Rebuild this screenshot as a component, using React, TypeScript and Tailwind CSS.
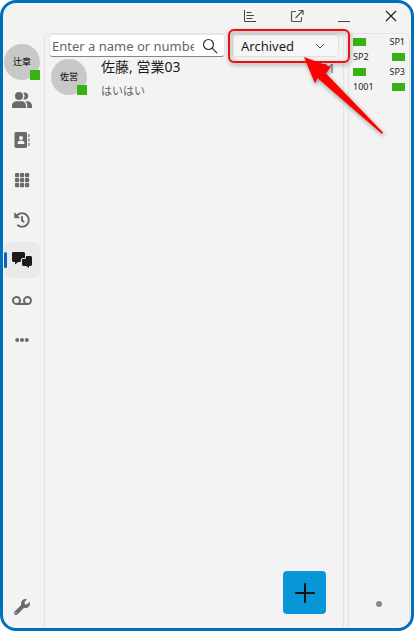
import React, { useState } from 'react';
import { FaEllipsisH, FaHistory, FaVoicemail, FaWrench } from 'react-icons/fa';

const speedDials = [
    { label: 'SP1', labelFirst: false },
    { label: 'SP2', labelFirst: true },
    { label: 'SP3', labelFirst: false },
    { label: '1001', labelFirst: true },
];

function PeopleIcon() {
    return (
        <svg width="20" height="16" viewBox="0 0 20 16" fill="currentColor">
            <circle cx="7" cy="4" r="4" />
            <path d="M0 16v-2.500C0 11 2 9.300 4.500 9.300h5c2.500 0 4.500 1.700 4.500 4.200V16z" />
            <path d="M11.300 7.200a5 5 0 0 0 0-6.300 3.500 3.500 0 1 1 0 6.300zM13 9.300h2.500c2.500 0 4.500 1.900 4.500 4.400V16h-4.800v-2.500c0-1.700-.8-3.200-2.200-4.200z" />
        </svg>
    );
}

function ContactBookIcon() {
    return (
        <svg width="16" height="16" viewBox="0 0 16 16" fill="currentColor">
            <path fillRule="evenodd" d="M2.200 0h9.100c1 0 1.700.7 1.700 1.700v12.600c0 1-.7 1.700-1.700 1.700H2.200c-1 0-1.700-.7-1.700-1.700V1.700C.5.7 1.200 0 2.200 0zM7 4a2 2 0 1 0 0 4 2 2 0 0 0 0-4zM3.500 12h7c0-2-1-3.200-2.500-3.200H6C4.500 8.800 3.500 10 3.500 12z" />
            <path d="M14.300 2h1.200v3h-1.200zM14.300 6.500h1.200v3h-1.200zM14.300 11h1.200v3h-1.200z" />
        </svg>
    );
}

function KeypadIcon() {
    return (
        <svg width="16" height="16" viewBox="0 0 16 16" fill="currentColor">
            {[1, 6, 11].map((y) => [1, 6, 11].map((x) => <rect key={`${x}-${y}`} x={x} y={y} width="4.200" height="4.200" rx="1" />))}
        </svg>
    );
}

function ChatIcon() {
    return (
        <svg width="20" height="16" viewBox="0 0 20 16" fill="currentColor">
            <path d="M1.500 0h10C12.300 0 13 .7 13 1.500V6h-2c-1.400 0-2.200.8-2.200 2.200V10H6.200L3 12.500V10H1.500C.7 10 0 9.300 0 8.500v-7C0 .7.7 0 1.500 0z" />
            <path d="M14 4h4.500c.8 0 1.500.7 1.500 1.500v7c0 .8-.7 1.500-1.500 1.500H17v2l-3-2h-2.500c-.8 0-1.500-.7-1.500-1.500V8c0-.6.400-1 1-1h1.500C13.300 7 14 6.300 14 5.500z" />
        </svg>
    );
}

const navItems = [
    { id: 'contacts', label: 'Contacts', icon: <PeopleIcon /> },
    { id: 'directory', label: 'Directory', icon: <ContactBookIcon /> },
    { id: 'keypad', label: 'Keypad', icon: <KeypadIcon /> },
    { id: 'history', label: 'History', icon: <FaHistory size={16} /> },
    { id: 'chat', label: 'Chat', icon: <ChatIcon /> },
    { id: 'voicemail', label: 'Voicemail', icon: <FaVoicemail size={20} /> },
    { id: 'more', label: 'More', icon: <FaEllipsisH size={14} /> },
];

function Avatar({ name }: { name: string }) {
    return (
        <div className="relative flex size-9 shrink-0 items-center justify-center rounded-full bg-[#c8c8c8] text-[9px] text-black">
            {name}
            <span className="absolute right-0 bottom-0 size-[10px] bg-[#36b312]" />
        </div>
    );
}

export default function App() {
    const [active, setActive] = useState('chat');
    const [search, setSearch] = useState('');
    const [filter, setFilter] = useState('Archived');

    return (
        <div className="flex min-h-screen bg-white font-['Noto_Sans','Noto_Sans_CJK_JP',sans-serif] text-[#1b1b1b]">
            <div className="flex flex-1 flex-col overflow-hidden rounded-2xl border-3 border-[#0070ba] bg-[#f3f3f3]">
                {/* Title bar */}
                <header className="flex h-[30px] shrink-0 items-center justify-end gap-[33px] pr-[13px] pb-1">
                    <button type="button" aria-label="Activity">
                        <svg width="14" height="14" viewBox="0 0 14 14" fill="none" stroke="#444">
                            <path d="M1.500 1v11.500H13M3.500 3.500h5M3.500 6.500h7.500M3.500 9.500h6" />
                        </svg>
                    </button>
                    <button type="button" aria-label="Pop out">
                        <svg width="14" height="14" viewBox="0 0 14 14" fill="none" stroke="#555" strokeWidth="1.200">
                            <path d="M6 2.500H2.500a1 1 0 0 0-1 1v8a1 1 0 0 0 1 1h8a1 1 0 0 0 1-1V8M8.500 1.500H13V6M13 1.500L5.500 9" />
                        </svg>
                    </button>
                    <button type="button" aria-label="Minimize">
                        <svg width="14" height="14" viewBox="0 0 14 14" stroke="#444">
                            <path d="M1 12.500h12" />
                        </svg>
                    </button>
                    <button type="button" aria-label="Close">
                        <svg width="14" height="14" viewBox="0 0 14 14" stroke="#222" strokeWidth="1.200">
                            <path d="M2 2l10 10M12 2L2 12" />
                        </svg>
                    </button>
                </header>

                <div className="flex flex-1">
                    <nav className="flex w-[41px] shrink-0 flex-col items-start pt-[11px] pl-px">
                        <Avatar name="辻章" />
                        <div className="mt-0.5 flex flex-col gap-1">
                            {navItems.map((item) => (
                                <button
                                    key={item.id}
                                    type="button"
                                    aria-label={item.label}
                                    onClick={() => setActive(item.id)}
                                    className={`relative flex size-9 items-center justify-center rounded-md ${active === item.id ? 'bg-[#eaeaea] text-[#1b1b1b]' : 'text-[#6a6a6a]'}`}
                                >
                                    {active === item.id && <span className="absolute left-0 h-4 w-[3px] rounded-full bg-[#0067c0]" />}
                                    {item.icon}
                                </button>
                            ))}
                        </div>
                        <button type="button" aria-label="Settings" className="mt-auto mb-[3px] flex size-9 items-center justify-center text-[#6a6a6a]">
                            <FaWrench size={16} />
                        </button>
                    </nav>

                    <main className="flex min-w-0 flex-1 flex-col rounded-t-md border border-b-0 border-[#e5e5e5]">
                        <div className="flex gap-[7px] px-1">
                            <div className="flex h-[23px] min-w-0 flex-1 items-center rounded border border-[#e5e5e5] border-b-[#868686] bg-white pr-1.5 pl-0.5">
                                <input
                                    type="text"
                                    aria-label="Search"
                                    className="min-w-0 flex-1 text-[13px] leading-5 outline-none placeholder:text-[#666]"
                                    placeholder="Enter a name or number"
                                    value={search}
                                    onChange={(e) => setSearch(e.target.value)}
                                />
                                <svg className="ml-2 shrink-0" width="16" height="16" viewBox="0 0 16 16" fill="none" stroke="#333" strokeWidth="1.200">
                                    <circle cx="6.500" cy="6.500" r="5" />
                                    <path d="M10.200 10.200l4.800 4.800" />
                                </svg>
                            </div>
                            <div className="relative w-[107px] shrink-0">
                                <select
                                    aria-label="Chat filter"
                                    className="block h-[23px] w-full appearance-none rounded border border-[#e0e0e0] bg-[#f6f6f6] pl-2 text-[13px] leading-5"
                                    value={filter}
                                    onChange={(e) => setFilter(e.target.value)}
                                >
                                    <option>Archived</option>
                                    <option>Active</option>
                                </select>
                                <svg className="pointer-events-none absolute top-2 right-3.5" width="10" height="8" viewBox="0 0 10 8" fill="none" stroke="#555">
                                    <path d="M1 2l4 4 4-4" />
                                </svg>
                                {/* Callout around the filter */}
                                <svg className="pointer-events-none absolute -top-2 -left-2 z-10 drop-shadow-[1px_2px_2px_rgba(0,0,0,0.4)]" width="170" height="120" viewBox="0 0 170 120">
                                    <rect x="5" y="4" width="120" height="32" rx="5" fill="none" stroke="#f00e0e" strokeWidth="2" />
                                    <path fill="#f00" d="M80 31L107 41 101.500 47 159 106.500 158 108 93.500 52 91 57.500z" />
                                </svg>
                            </div>
                        </div>

                        <div className="flex items-start pr-2 pl-1.5">
                            <div className="pt-0.5">
                                <Avatar name="佐営" />
                            </div>
                            <div className="ml-3.5 flex-1">
                                <p className="text-sm leading-5">佐藤, 営業03</p>
                                <p className="mt-1 text-[11px] leading-5 text-[#666]">はいはい</p>
                            </div>
                            <time className="pt-1 text-xs leading-4 text-[#666]">31</time>
                        </div>

                        <button type="button" aria-label="New chat" className="mt-auto mr-[17px] mb-3.5 flex size-[43px] items-center justify-center self-end rounded bg-[#0797d8]">
                            <svg width="20" height="20" viewBox="0 0 20 20" stroke="#111" strokeWidth="2" strokeLinecap="round">
                                <path d="M10 1v18M1 10h18" />
                            </svg>
                        </button>
                    </main>

                    <aside className="mr-px ml-1 flex w-[62px] shrink-0 flex-col rounded-t-md border border-b-0 border-[#e5e5e5] px-1">
                        {speedDials.map((dial) => (
                            <button
                                key={dial.label}
                                type="button"
                                className={`flex h-[15px] items-center justify-between text-[9px] leading-3 ${dial.labelFirst ? '' : 'flex-row-reverse'}`}
                            >
                                <span>{dial.label}</span>
                                <span className="h-2 w-[13px] bg-[#36b312]" />
                            </button>
                        ))}
                        <span className="mx-auto mt-auto mb-[21px] size-1.5 rounded-full bg-[#888]" />
                    </aside>
                </div>
            </div>
        </div>
    );
}
